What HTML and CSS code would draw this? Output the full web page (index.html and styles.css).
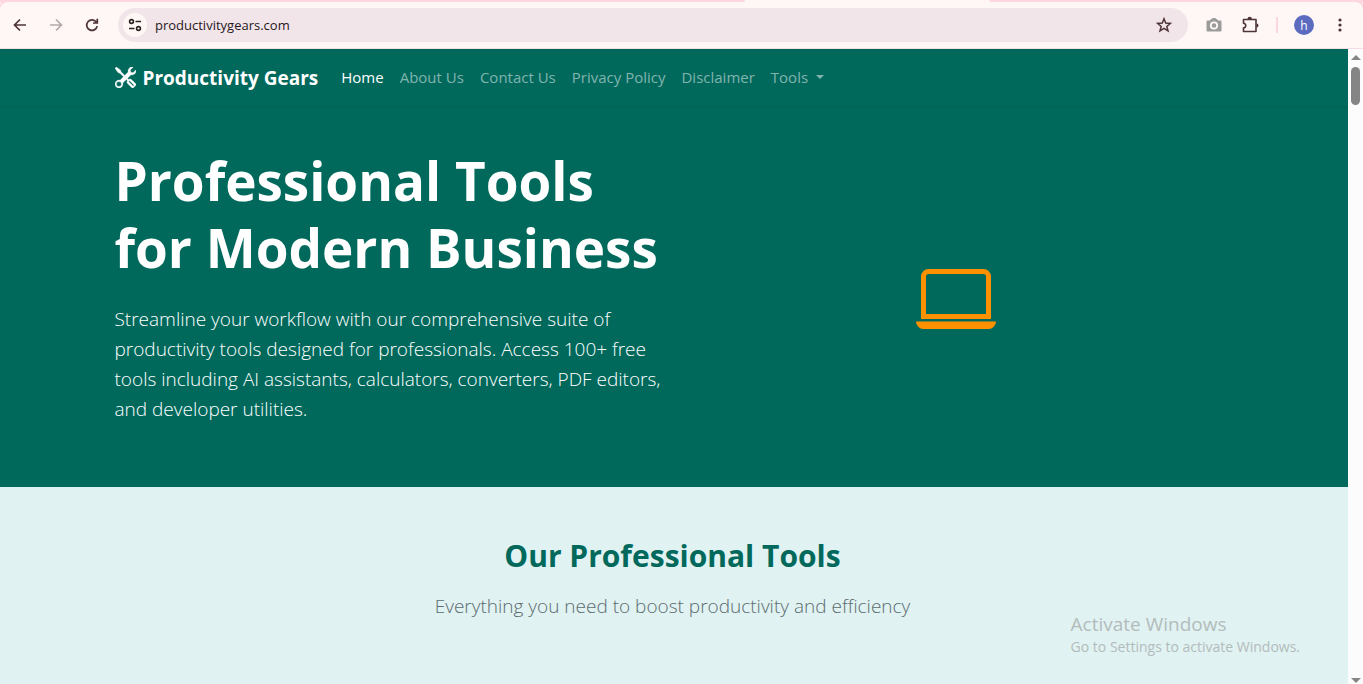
FILE: index.html
```html
<!DOCTYPE html>
<html lang="en">
<head>
<meta charset="utf-8">
<title>Productivity Gears</title>
<link rel="stylesheet" href="styles.css">
</head>
<body>
<div class="browser">
  <div class="tabstrip"><span class="tab-edge tab-edge-left"></span><span class="tab-edge tab-edge-right"></span></div>
  <div class="toolbar">
    <button class="tool-btn" aria-label="Back"><svg width="16" height="16" viewBox="0 0 16 16" fill="none" stroke="currentColor" stroke-width="1.7"><path d="M14 8H3M8 2.5 2.5 8 8 13.5"/></svg></button>
    <button class="tool-btn tool-btn-off" aria-label="Forward"><svg width="16" height="16" viewBox="0 0 16 16" fill="none" stroke="currentColor" stroke-width="1.7"><path d="M2 8h11M8 2.5 13.5 8 8 13.5"/></svg></button>
    <button class="tool-btn" aria-label="Reload"><svg width="16" height="16" viewBox="0 0 16 16" fill="none" stroke="currentColor" stroke-width="1.7"><path d="M13.2 9.2A5.300 5.300 0 1 1 12.300 5M13.300 1.800V6H9"/></svg></button>
    <div class="address">
      <button class="site-info" aria-label="View site information"><svg width="14" height="14" viewBox="0 0 14 14" fill="none" stroke="currentColor" stroke-width="1.6"><circle cx="3.5" cy="3.5" r="1.9"/><path d="M7.5 3.5H13M1 10.5h5.500"/><circle cx="10.5" cy="10.5" r="1.9"/></svg></button>
      <input class="url" type="text" aria-label="Address" value="productivitygears.com">
      <button class="star" aria-label="Bookmark this page"><svg width="16" height="16" viewBox="0 0 16 16" fill="none" stroke="currentColor" stroke-width="1.5"><path d="m8 1.800 1.700 4.300 4.700.3-3.600 3 1.200 4.500L8 11.400l-4 2.500 1.200-4.500-3.600-3 4.700-.3z"/></svg></button>
    </div>
    <div class="extensions">
      <button class="ext camera" aria-label="Capture"><svg width="16" height="16" viewBox="0 0 16 16"><path fill="#9a9c9c" d="M1.500 3.500H4l1-1.500h1l.5-1h3l.5 1h1l1 1.500h2.500a1 1 0 0 1 1 1v9a1 1 0 0 1-1 1h-13a1 1 0 0 1-1-1v-9a1 1 0 0 1 1-1z"/><circle cx="8" cy="8.500" r="3.200" fill="#9a9c9c" stroke="#fff7f5" stroke-width="1.800"/></svg></button>
      <button class="ext" aria-label="Extensions"><svg width="18" height="18" viewBox="0 0 18 18"><path d="M2.500 3.500H15v12H2.500v-3.700c3 0 3-4.600 0-4.600z" fill="none" stroke="currentColor" stroke-width="1.600" stroke-linejoin="round"/><path d="M6.500 3a2.200 2.200 0 0 1 4.400 0zM15.500 7.500a2 2 0 0 1 0 4z" fill="currentColor"/></svg></button>
      <span class="divider"></span>
      <button class="avatar" aria-label="Profile">h</button>
      <button class="ext kebab" aria-label="Menu"><svg width="4" height="14" viewBox="0 0 4 14" fill="currentColor"><circle cx="2" cy="2" r="1.600"/><circle cx="2" cy="7" r="1.600"/><circle cx="2" cy="12" r="1.600"/></svg></button>
    </div>
  </div>
  <div class="viewport">
    <div class="page">
      <nav class="navbar">
        <div class="container nav-row">
          <a class="brand" href="#"><svg width="21" height="21" viewBox="0 0 16 16" fill="currentColor" stroke="currentColor" stroke-width=".3"><path fill-rule="evenodd" d="M1 0 0 1l2.200 3.081a1 1 0 0 0 .815.419h.07a1 1 0 0 1 .708.293l2.675 2.675-2.617 2.654A3.003 3.003 0 0 0 0 13a3 3 0 1 0 5.878-.851l2.654-2.617.968.968-.305.914a1 1 0 0 0 .242 1.023l3.270 3.270a.997.997 0 0 0 1.414 0l1.586-1.586a.997.997 0 0 0 0-1.414l-3.270-3.270a1 1 0 0 0-1.023-.242L10.500 9.500l-.960-.960 2.680-2.643A3.005 3.005 0 0 0 16 3q0-.405-.102-.777l-2.140 2.141L12 4l-.364-1.757L13.777.102a3 3 0 0 0-3.675 3.680L7.462 6.460 4.793 3.793a1 1 0 0 1-.293-.707v-.071a1 1 0 0 0-.419-.814zm9.646 10.646a.5.5 0 0 1 .708 0l2.914 2.915a.5.5 0 0 1-.707.707l-2.915-2.914a.5.5 0 0 1 0-.708M3 11l.471.242.529.026.287.445.445.287.026.529L5 13l-.242.471-.026.529-.445.287-.287.445-.529.026L3 15l-.471-.242L2 14.732l-.287-.445L1.268 14l-.026-.529L1 13l.242-.471.026-.529.445-.287.287-.445.529-.026z"/></svg>Productivity Gears</a>
          <div class="links">
            <a class="active" href="#">Home</a>
            <a href="#">About Us</a>
            <a href="#">Contact Us</a>
            <a href="#">Privacy Policy</a>
            <a href="#">Disclaimer</a>
            <a class="dropdown" href="#">Tools</a>
          </div>
        </div>
      </nav>
      <section class="hero">
        <div class="container hero-row">
          <div class="hero-text">
            <h1>Professional Tools<br>for Modern Business</h1>
            <p>Streamline your workflow with our comprehensive suite of<br>productivity tools designed for professionals. Access 100+ free<br>tools including AI assistants, calculators, converters, PDF editors,<br>and developer utilities.</p>
          </div>
          <div class="hero-art"><svg width="80" height="80" viewBox="0 0 16 16" fill="currentColor"><path d="M13.500 3a.5.5 0 0 1 .5.5V11H2V3.500a.5.5 0 0 1 .5-.5zm-11-1A1.500 1.500 0 0 0 1 3.500V12h14V3.500A1.500 1.500 0 0 0 13.500 2zM0 12.500h16a1.500 1.500 0 0 1-1.500 1.500h-13A1.500 1.500 0 0 1 0 12.500"/></svg></div>
        </div>
      </section>
      <section class="tools">
        <div class="container">
          <h2>Our Professional Tools</h2>
          <p>Everything you need to boost productivity and efficiency</p>
        </div>
      </section>
    </div>
    <div class="scrollbar"><span class="arrow arrow-up"></span><span class="thumb"></span><span class="arrow arrow-down"></span></div>
    <div class="watermark"><div class="watermark-title">Activate Windows</div><div>Go to Settings to activate Windows.</div></div>
  </div>
</div>
</body>
</html>
```
FILE: styles.css
```css
* { box-sizing: border-box; }
body { margin: 0; font-family: "Open Sans", "Noto Sans", sans-serif; }
button { border: 0; padding: 0; background: none; color: inherit; font: inherit; display: flex; align-items: center; justify-content: center; }
a { color: inherit; text-decoration: none; }
h1, h2, p { margin: 0; }
svg { display: block; flex: none; }

.browser { height: 100vh; display: flex; flex-direction: column; overflow: hidden; }
.tabstrip { position: relative; z-index: 1; height: 2px; background: #fff7f5; display: flex; justify-content: space-between; }
.tab-edge { height: 2px; background: #ffd7df; }
.tab-edge-left { width: 745px; border-bottom-right-radius: 4px; }
.tab-edge-right { width: 374px; border-bottom-left-radius: 4px; }
.toolbar { height: 47px; background: #fff7f5; border-bottom: 1px solid #f4dce1; display: flex; align-items: center; padding: 0 14px 0 12px; color: #4d3439; gap: 20px; flex: none; border-radius: 8px 8px 0 0; box-shadow: 0 -4px 0 #ffd7df; }
.tool-btn { width: 16px; height: 16px; }
.tool-btn-off { color: #b5a8a9; }
.address { flex: 1; height: 34px; border-radius: 17px; background: #f1e5e9; display: flex; align-items: center; padding: 0 16px 0 5px; margin-left: -2px; }
.site-info { width: 24px; height: 24px; border-radius: 50%; background: #fff7f5; color: #2c2224; }
.url { flex: 1; border: 0; outline: 0; background: none; margin-left: 8px; padding: 0; font-family: inherit; font-size: 13px; color: #27191c; }
.star { width: 16px; height: 16px; }
.extensions { display: flex; align-items: center; }
.ext { width: 18px; height: 18px; }
.camera { margin: 0 18px 0 -3px; }
.divider { width: 2px; height: 16px; background: #ffd7df; margin: 0 16px 0 17px; }
.avatar { width: 20px; height: 20px; border-radius: 50%; background: #5c6bc0; color: #fff; font-size: 12px; }
.kebab { margin-left: 17px; }

.viewport { flex: 1; display: flex; position: relative; min-height: 0; }
.page { flex: 1; background: #e0f2f1; overflow: hidden; }
.container { max-width: 1143px; margin: 0 auto; padding: 0 15px 0 12px; }
.navbar { background: #00695c; color: #fff; position: relative; box-shadow: 0 1px 2px rgba(0, 0, 0, .1); }
.nav-row { height: 57px; display: flex; align-items: center; }
.brand { display: flex; align-items: center; gap: 7px; font-size: 19px; font-weight: 700; white-space: nowrap; margin-right: 23px; }
.links { display: flex; gap: 16px; padding-bottom: 2px; font-size: 15px; font-weight: 500; color: #80b4ae; white-space: nowrap; }
.links .active { color: #fff; }
.dropdown { display: flex; align-items: center; gap: 8px; }
.dropdown::after { content: ""; border: 4px solid transparent; border-top-color: currentColor; border-bottom: 0; }

.hero { background: #00695c; color: #fff; padding: 41px 0 33px; }
.hero-row { display: flex; align-items: center; }
.hero-text { flex: 1; padding-bottom: 30px; white-space: nowrap; }
.hero-text h1 { font-size: 53px; line-height: 67px; font-weight: 700; margin-bottom: 23px; }
.hero-text p { font-size: 19px; line-height: 30px; font-weight: 300; }
.hero-art { flex: 1; display: flex; justify-content: center; color: #ff9100; padding: 0 0 4px 17px; }

.tools { text-align: center; padding: 49px 0; }
.tools h2 { font-size: 30px; line-height: 40px; font-weight: 700; color: #00695c; margin-bottom: 15px; }
.tools p { font-size: 19px; line-height: 30px; font-weight: 300; color: #5c6c70; }

.scrollbar { width: 15px; background: #fcfcfc; display: flex; flex-direction: column; align-items: center; padding: 6px 0 1px; }
.arrow { border: 5px solid transparent; }
.arrow-up { border-bottom-color: #858585; border-top: 0; }
.arrow-down { border-top-color: #858585; border-bottom: 0; margin-top: auto; }
.thumb { width: 9px; height: 38px; border-radius: 5px; background: #858585; margin-top: 7px; }
.watermark { position: absolute; right: 63px; bottom: 26px; font-size: 14px; line-height: 22px; color: #b3bcbc; }
.watermark-title { font-size: 19px; line-height: 24px; }
```
